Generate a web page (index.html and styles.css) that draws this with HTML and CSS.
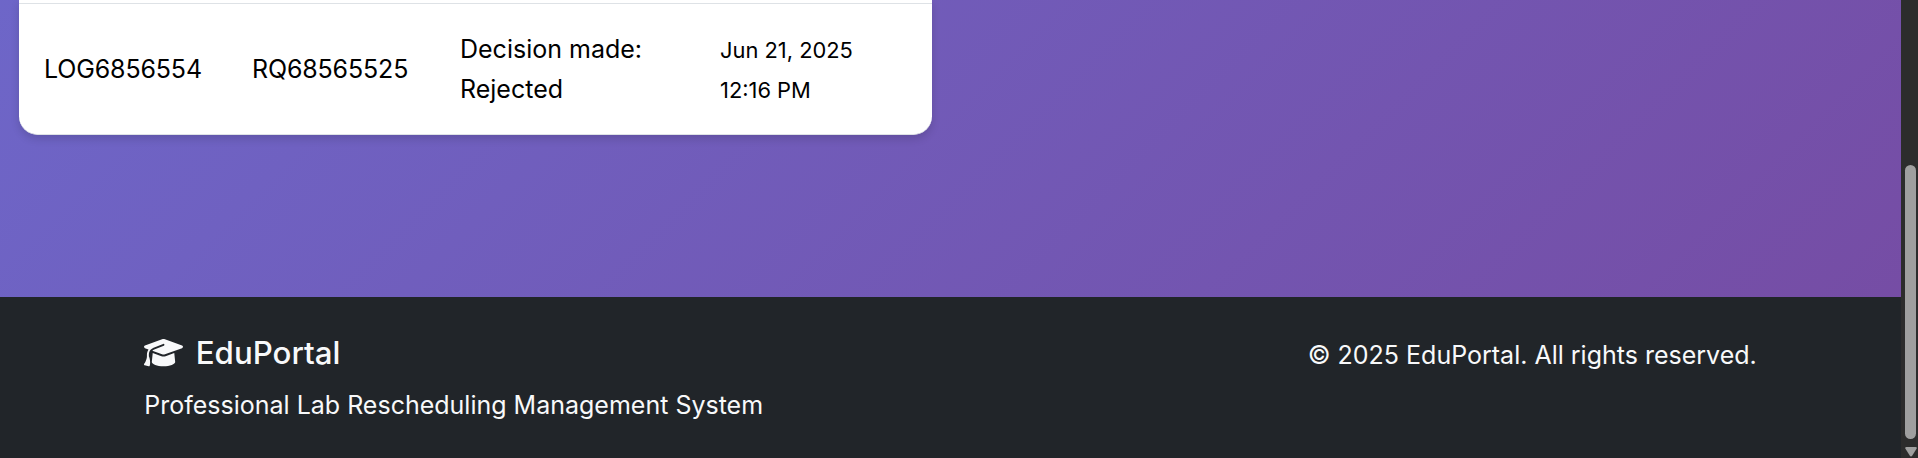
FILE: index.html
```html
<!DOCTYPE html>
<html lang="en">
<head>
<meta charset="utf-8">
<title>EduPortal</title>
<link rel="stylesheet" href="styles.css">
</head>
<body>
<div class="window">
  <div class="page">
    <main class="content">
      <div class="table-card">
        <div class="row">
          <div class="cell cell-id">LOG6856554</div>
          <div class="cell cell-id">RQ68565525</div>
          <div class="cell">Decision made:<br>Rejected</div>
          <div class="cell cell-date">Jun 21, 2025<br>12:16 PM</div>
        </div>
      </div>
    </main>
    <footer class="footer">
      <div class="container">
        <div>
          <h5 class="brand"><svg class="brand-icon" viewBox="0 0 640 512" aria-hidden="true"><path d="M320 32c-8.1 0-16.1 1.4-23.7 4.1L15.8 137.4C6.3 140.9 0 149.9 0 160s6.3 19.1 15.8 22.6l57.9 20.9C57.3 229.3 48 259.8 48 291.9v28.1c0 28.4-10.8 57.7-22.3 80.8c-6.5 13-13.9 25.8-22.5 37.6C0 442.7-.9 448.3 .9 453.4s6 8.9 11.2 10.2l64 16c4.2 1.1 8.7 .3 12.4-2s6.3-6.1 7.1-10.4c8.6-42.8 4.3-81.2-2.1-108.7C90.3 344.3 86 329.8 80 316.5V291.9c0-30.2 10.2-58.7 27.9-81.5c12.9-15.5 29.6-28 49.2-35.7l157-61.7c8.2-3.2 17.5 .8 20.7 9s-.8 17.5-9 20.7l-157 61.7c-12.4 4.9-23.3 12.4-32.2 21.6l159.6 57.6c7.6 2.7 15.6 4.1 23.7 4.1s16.1-1.4 23.7-4.1L624.2 182.6c9.5-3.4 15.8-12.5 15.8-22.6s-6.3-19.1-15.8-22.6L343.7 36.1C336.1 33.4 328.1 32 320 32zM128 408c0 35.3 86 72 192 72s192-36.7 192-72L496.7 262.6 354.5 314c-11.1 4-22.8 6-34.5 6s-23.5-2-34.5-6L143.3 262.6 128 408z"/></svg>EduPortal</h5>
          <p class="tagline">Professional Lab Rescheduling Management System</p>
        </div>
        <p class="copyright">© 2025 EduPortal. All rights reserved.</p>
      </div>
    </footer>
  </div>
  <div class="scrollbar">
    <div class="thumb"></div>
    <svg class="arrow" viewBox="0 0 12 10" aria-hidden="true"><path d="M1.4 0h9.2q1.8.2.9 1.8L7.3 8.6Q6 10.4 4.7 8.6L.5 1.8Q-.4.2 1.4 0z"/></svg>
  </div>
</div>
</body>
</html>
```
FILE: styles.css
```css
* { box-sizing: border-box; }
html, body { margin: 0; height: 100%; overflow: hidden; }
body {
  font-family: Inter, "Liberation Sans", sans-serif;
  font-size: 25px;
  line-height: 40px;
  color: #000;
}
.window { display: flex; height: 458px; }
.page {
  flex: 1;
  display: flex;
  flex-direction: column;
  background: linear-gradient(135deg, #667eea 0%, #764ba2 100%) left bottom / 100% 2550px no-repeat;
}
.content { height: 297px; padding-left: 19px; }
.table-card {
  width: 913px;
  height: 135px;
  padding-top: 3px;
  background: #fff;
  border-radius: 0 0 18.75px 18.75px;
  border-bottom: 1px solid #dee2e6;
  box-shadow: 0 4px 8px rgba(0, 0, 0, .14);
}
.row {
  display: grid;
  grid-template-columns: 208px 208px 260px 1fr;
  align-items: center;
  height: 131px;
  padding-left: 25px;
  border-top: 1px solid #dee2e6;
}
.cell-id { letter-spacing: -.15px; }
.cell-date { padding-top: 1px; font-size: 21.875px; }
.footer { flex: 1; background: #212529; color: #f8f9fa; }
.container {
  display: flex;
  justify-content: space-between;
  width: 1650px;
  margin: 0 auto;
  padding: 37px 18.75px 0;
}
.brand {
  display: flex;
  align-items: center;
  gap: 12.5px;
  margin: 0 0 13px;
  font-size: 31.25px;
  font-weight: 500;
  line-height: 38px;
}
.brand-icon { width: 39px; height: 31.25px; fill: currentColor; }
.tagline, .copyright { margin: 0; }
.copyright { padding-top: 1px; }
.scrollbar {
  display: flex;
  flex-direction: column;
  align-items: center;
  gap: 8px;
  width: 17px;
  padding: 165px 0 0 2px;
  background: #2c2c2c;
}
.thumb { width: 11px; height: 274px; border-radius: 6px; background: #9f9f9f; }
.arrow { width: 12px; height: 10px; fill: #9f9f9f; }
```
